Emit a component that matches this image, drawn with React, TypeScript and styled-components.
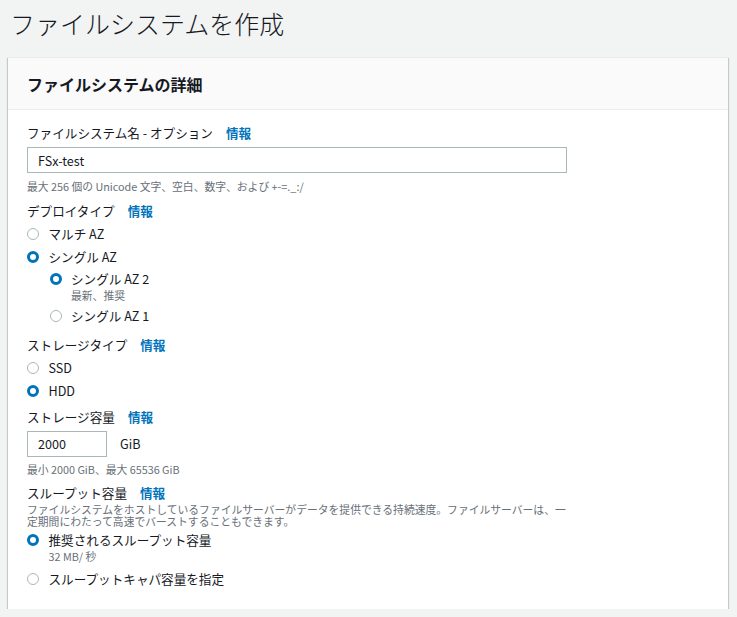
import React from "react";
import styled, { createGlobalStyle, css } from "styled-components";

const GlobalStyle = createGlobalStyle`
  html, body { margin: 0; padding: 0; }
  body {
    background: #f2f3f3;
    color: #16191f;
    font-family: "Noto Sans CJK JP", "Noto Sans", sans-serif;
    -webkit-font-smoothing: antialiased;
  }
  * { box-sizing: border-box; }
`;

const Page = styled.div`
  padding: 0 9px 0 8px;
`;

const Title = styled.h1`
  margin: 0;
  padding: 6px 0 0 2px;
  font-size: 25px;
  line-height: 34px;
  font-weight: 300;
  color: #16191f;
`;

const Card = styled.section`
  margin-top: 17px;
  background: #ffffff;
  border-top: 1px solid #eaeded;
  box-shadow: 0 1px 1px 0 rgba(0, 28, 36, 0.3), 1px 1px 1px 0 rgba(0, 28, 36, 0.15),
    -1px 1px 1px 0 rgba(0, 28, 36, 0.15);
`;

const CardHeader = styled.header`
  height: 52px;
  display: flex;
  align-items: center;
  padding: 0 19px;
  background: #fafafa;
  border-bottom: 1px solid #eaeded;
`;

const CardTitle = styled.h2`
  margin: 0;
  font-size: 16px;
  line-height: 22px;
  font-weight: 700;
`;

const CardBody = styled.div`
  padding: 14px 19px 21px;
`;

const Form = styled.div`
  width: 540px;
  display: flex;
  flex-direction: column;
  gap: 8px;
`;

const Field = styled.div<{ $extraBottom?: number }>`
  display: flex;
  flex-direction: column;
  margin-bottom: ${(p) => p.$extraBottom ?? 0}px;
`;

const LabelRow = styled.div`
  display: flex;
  align-items: center;
  gap: 13px;
  font-size: 12.6px;
  line-height: 18px;
`;

const InfoLink = styled.a`
  color: #0073bb;
  font-weight: 700;
  text-decoration: none;
  font-size: 12.6px;
`;

const TextInput = styled.input<{ $width?: number }>`
  display: block;
  height: 26px;
  width: ${(p) => (p.$width ? `${p.$width}px` : "100%")};
  border: 1px solid #aab7b8;
  border-radius: 0;
  padding: 0 10px;
  font-family: inherit;
  font-size: 12.6px;
  color: #16191f;
  background: #fff;
  outline: none;
`;

const InputRow = styled.div`
  margin-top: 5px;
  display: flex;
  align-items: center;
  gap: 13px;
  font-size: 12.6px;
`;

const Hint = styled.div<{ $top?: number; $lh?: number }>`
  margin-top: ${(p) => p.$top ?? 6}px;
  font-size: 10.8px;
  line-height: ${(p) => p.$lh ?? 14}px;
  color: #687078;
`;

const RadioGroup = styled.div<{ $indent?: number; $gap?: number; $top?: number }>`
  display: flex;
  flex-direction: column;
  gap: ${(p) => p.$gap ?? 4.5}px;
  margin-top: ${(p) => p.$top ?? 5}px;
  margin-left: ${(p) => p.$indent ?? 0}px;
`;

const Option = styled.div`
  display: flex;
  flex-direction: column;
`;

const OptionRow = styled.label`
  display: grid;
  grid-template-columns: 12px 1fr;
  column-gap: 9.5px;
  align-items: start;
  cursor: pointer;
`;

const Circle = styled.span<{ $checked?: boolean }>`
  width: 12px;
  height: 12px;
  margin-top: 3px;
  border-radius: 50%;
  background: #fff;
  ${(p) =>
    p.$checked
      ? css`
          border: 3.6px solid #0073bb;
        `
      : css`
          border: 1px solid #aab7b8;
        `}
`;

const OptionText = styled.div`
  display: flex;
  flex-direction: column;
`;

const OptionTitle = styled.span`
  font-size: 12.6px;
  line-height: 18px;
`;

const OptionDesc = styled.span`
  font-size: 10.8px;
  line-height: 14px;
  color: #687078;
`;

type RadioProps = {
  checked?: boolean;
  title: string;
  desc?: string;
  children?: React.ReactNode;
};

const Radio = ({ checked, title, desc, children }: RadioProps) => (
  <Option>
    <OptionRow>
      <Circle $checked={checked} />
      <OptionText>
        <OptionTitle>{title}</OptionTitle>
        {desc && <OptionDesc>{desc}</OptionDesc>}
      </OptionText>
    </OptionRow>
    {children}
  </Option>
);

const Label = ({ text }: { text: string }) => (
  <LabelRow>
    <span>{text}</span>
    <InfoLink href="#">情報</InfoLink>
  </LabelRow>
);

export default function App() {
  return (
    <>
      <GlobalStyle />
      <Page>
        <Title>ファイルシステムを作成</Title>
        <Card>
          <CardHeader>
            <CardTitle>ファイルシステムの詳細</CardTitle>
          </CardHeader>
          <CardBody>
            <Form>
              <Field $extraBottom={1}>
                <Label text="ファイルシステム名 - オプション" />
                <InputRow>
                  <TextInput defaultValue="FSx-test" />
                </InputRow>
                <Hint>最大 256 個の Unicode 文字、空白、数字、および +-=._:/</Hint>
              </Field>

              <Field $extraBottom={3}>
                <Label text="デプロイタイプ" />
                <RadioGroup>
                  <Radio title="マルチ AZ" />
                  <Radio checked title="シングル AZ">
                    <RadioGroup $indent={22.5} $top={4.5}>
                      <Radio checked title="シングル AZ 2" desc="最新、推奨" />
                      <Radio title="シングル AZ 1" />
                    </RadioGroup>
                  </Radio>
                </RadioGroup>
              </Field>

              <Field>
                <Label text="ストレージタイプ" />
                <RadioGroup $gap={5}>
                  <Radio title="SSD" />
                  <Radio checked title="HDD" />
                </RadioGroup>
              </Field>

              <Field>
                <Label text="ストレージ容量" />
                <InputRow>
                  <TextInput $width={80} defaultValue="2000" />
                  <span>GiB</span>
                </InputRow>
                <Hint $top={5}>最小 2000 GiB、最大 65536 GiB</Hint>
              </Field>

              <Field>
                <Label text="スループット容量" />
                <Hint $top={1} $lh={12}>
                  ファイルシステムをホストしているファイルサーバーがデータを提供できる持続速度。ファイルサーバーは、一定期間にわたって高速でバーストすることもできます。
                </Hint>
                <RadioGroup $gap={7} $top={4.5}>
                  <Radio checked title="推奨されるスループット容量" desc="32 MB/ 秒" />
                  <Radio title="スループットキャパ容量を指定" />
                </RadioGroup>
              </Field>
            </Form>
          </CardBody>
        </Card>
      </Page>
    </>
  );
}
